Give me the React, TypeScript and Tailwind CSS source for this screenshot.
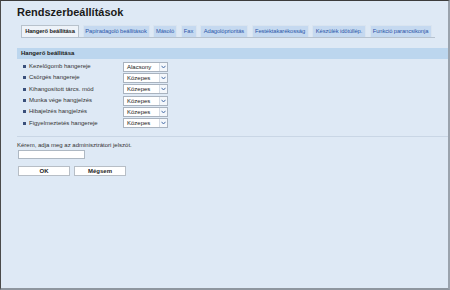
import React from 'react';

const tabs = [
  { label: 'Hangerő beállítása', w: 'w-[58px]' },
  { label: 'Papíradagoló beállítások', w: 'w-[67px]' },
  { label: 'Másoló', w: 'w-[24px]' },
  { label: 'Fax', w: 'w-[16px]' },
  { label: 'Adagolóprioritás', w: 'w-[48px]' },
  { label: 'Festéktakarékosság', w: 'w-[57px]' },
  { label: 'Készülék időtúllép.', w: 'w-[54px]' },
  { label: 'Funkció parancsikonja', w: 'w-[62px]' },
];

const rows = [
  { label: 'Kezelőgomb hangereje', value: 'Alacsony' },
  { label: 'Csörgés hangereje', value: 'Közepes' },
  { label: 'Kihangosított tárcs. mód', value: 'Közepes' },
  { label: 'Munka vége hangjelzés', value: 'Közepes' },
  { label: 'Hibajelzés hangjelzés', value: 'Közepes' },
  { label: 'Figyelmeztetés hangereje', value: 'Közepes' },
];

function FakeSelect({ value }: { value: string }) {
  return (
    <div className="flex h-[10px] w-[45px] items-stretch border border-[#a9b3bf] bg-white">
      <span className="flex-1 pl-[3px] text-[6px] leading-[8px] text-[#222]">{value}</span>
      <span className="flex w-[8px] items-center justify-center border-l border-[#d6dde6] bg-[#f4f7fb]">
        <svg width="5" height="4" viewBox="0 0 5 4">
          <path d="M0.5 0.8 L2.5 3 L4.5 0.8" fill="none" stroke="#4a6fa8" strokeWidth="1" />
        </svg>
      </span>
    </div>
  );
}

export default function App() {
  return (
    <div
      className="flex h-[290px] w-[450px] flex-col border-t border-l border-t-[#3c3c3c] border-l-[#4a4a4a] border-r-2 border-b-2 border-r-[#9aa3ad] border-b-[#8e969f] bg-[#dee9f5] text-[#222]"
      style={{ fontFamily: '"Liberation Sans", Arial, sans-serif' }}
    >
      {/* Title */}
      <h1 className="ml-[16px] mt-[5px] text-[11px] font-bold leading-[13px] text-[#1a1a1a]">
        Rendszerbeállítások
      </h1>

      {/* Tabs */}
      <div className="ml-[20px] mt-[6px] flex w-[414px] gap-[3.5px] border-b border-[#b6c2cf]">
        {tabs.map((t, i) =>
          i === 0 ? (
            <div
              key={t.label}
              className={`${t.w} flex h-[12px] shrink-0 items-center justify-center whitespace-nowrap border border-b-0 border-[#b8c2cc] bg-[#eef3f9] text-[5.8px] font-bold tracking-[-0.1px] text-[#222]`}
            >
              {t.label}
            </div>
          ) : (
            <div
              key={t.label}
              className={`${t.w} flex h-[12px] shrink-0 items-center justify-center whitespace-nowrap border border-b-0 border-[#d9e4f0] bg-[#c5d9f0] text-[5.8px] tracking-[-0.1px] text-[#2a55a8]`}
            >
              {t.label}
            </div>
          )
        )}
      </div>

      {/* Section header */}
      <div className="ml-[16px] mt-[10px] flex h-[11px] items-center bg-[#bcd6ee] pl-[4px] text-[6px] font-bold text-[#1a1a1a]">
        Hangerő beállítása
      </div>

      {/* Rows */}
      <div className="ml-[22px] mt-[2px] flex flex-col">
        {rows.map((r) => (
          <div key={r.label} className="flex h-[11.3px] items-center">
            <span className="mr-[3px] h-[3px] w-[3px] bg-[#3a4f7a]" />
            <span className="w-[94px] whitespace-nowrap text-[6px] text-[#333]">{r.label}</span>
            <FakeSelect value={r.value} />
          </div>
        ))}
      </div>

      {/* Separator */}
      <div className="ml-[16px] mt-[7px] h-px bg-[#c9d6e5]" />

      {/* Password */}
      <div className="ml-[16px] mt-[4px] text-[6px] leading-[8px] text-[#333]">
        Kérem, adja meg az adminisztrátori jelszót.
      </div>
      <div className="ml-[17px] mt-[1px] h-[9px] w-[67px] border border-[#aeb8c3] bg-white" />

      <div className="ml-[17px] mt-[7px] flex gap-[4px]">
        <button className="h-[10px] w-[52px] border border-[#b7bec6] bg-white text-[6px] font-bold leading-[8px] text-[#222]">
          OK
        </button>
        <button className="h-[10px] w-[52px] border border-[#b7bec6] bg-white text-[6px] font-bold leading-[8px] text-[#222]">
          Mégsem
        </button>
      </div>
    </div>
  );
}
